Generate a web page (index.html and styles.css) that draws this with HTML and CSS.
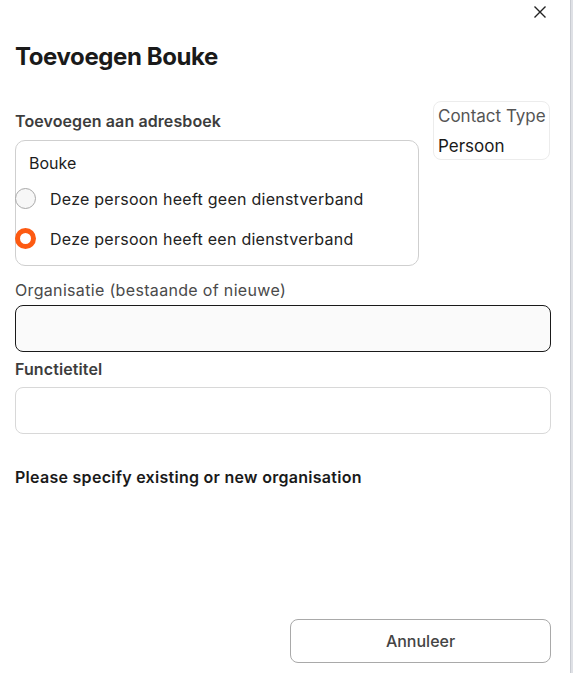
FILE: index.html
```html
<!DOCTYPE html>
<html lang="nl">
<head>
<meta charset="utf-8">
<link rel="stylesheet" href="styles.css">
</head>
<body>
<div class="backdrop">
  <div class="dialog">
    <button class="close" aria-label="Sluiten">
      <svg width="14" height="14" viewBox="0 0 14 14"><path d="M1.5 1.5 L12.5 12.5 M12.5 1.5 L1.5 12.5" stroke="#222" stroke-width="1.4" fill="none"/></svg>
    </button>
    <h1 class="title">Toevoegen Bouke</h1>
    <div class="top-row">
      <div class="left-col">
        <div class="label strong">Toevoegen aan adresboek</div>
        <div class="group">
          <div class="name">Bouke</div>
          <label class="radio"><span class="dot"></span><span>Deze persoon heeft geen dienstverband</span></label>
          <label class="radio"><span class="dot on"></span><span>Deze persoon heeft een dienstverband</span></label>
        </div>
      </div>
      <div class="type-box">
        <div class="type-label">Contact Type</div>
        <div class="type-value">Persoon</div>
      </div>
    </div>
    <div class="label light org-label">Organisatie (bestaande of nieuwe)</div>
    <div class="input focused org-input"></div>
    <div class="label strong func-label">Functietitel</div>
    <div class="input"></div>
    <div class="warning">Please specify existing or new organisation</div>
    <div class="footer">
      <button class="cancel">Annuleer</button>
    </div>
  </div>
</div>
</body>
</html>
```

FILE: styles.css
```css
* { box-sizing: border-box; }
html, body { margin: 0; padding: 0; background: #fff; }
body {
  font-family: Inter, "Noto Sans", sans-serif;
  color: #1c1c1c;
}
.backdrop {
  width: 573px;
  height: 673px;
  background: #dfe1e6;
  display: flex;
}
.dialog {
  width: 571px;
  height: 673px;
  background: #fff;
  border-right: 1px solid #c9ccd2;
  padding: 0 19px 0 15px;
  position: relative;
  display: flex;
  flex-direction: column;
}
.close {
  position: absolute;
  right: 23px;
  top: 5px;
  border: 0;
  background: none;
  padding: 0;
  width: 14px;
  height: 14px;
}
.title {
  margin: 43px 0 0;
  font-size: 24px;
  font-weight: 700;
  letter-spacing: -0.4px;
  line-height: 28px;
  color: #1a1a1a;
}
.top-row {
  display: flex;
  justify-content: space-between;
  margin-top: 30px;
}
.left-col { width: 404px; }
.label {
  font-size: 16px;
  line-height: 20px;
}
.strong { font-weight: 600; color: #3d3d3d; letter-spacing: 0.1px; }
.light { font-weight: 400; color: #4a4a4a; letter-spacing: 0.33px; }
.left-col .label { margin-top: 10px; }
.group {
  margin-top: 9px;
  border: 1px solid #cfcfcf;
  border-radius: 10px;
  height: 126px;
  padding-top: 12px;
}
.name {
  padding-left: 13px;
  font-size: 16px;
  line-height: 20px;
  color: #1c1c1c;
}
.radio {
  display: flex;
  align-items: center;
  gap: 14px;
  margin-left: -1px;
  font-size: 16px;
  line-height: 20px;
  letter-spacing: 0.25px;
  color: #222;
  margin-top: 15px;
}
.radio + .radio { margin-top: 19px; }
.dot {
  width: 21px;
  height: 21px;
  border-radius: 50%;
  border: 1px solid #a8a8a8;
  background: #f7f7f7;
  flex: none;
}
.dot.on {
  border: 5px solid #fd5a12;
  background: #fff;
}
.type-box {
  width: 117px;
  height: 59px;
  border: 1px solid #ececec;
  border-radius: 8px;
  padding: 3px 0 0 4px;
  margin-right: 1px;
}
.type-label {
  font-size: 17px;
  line-height: 22px;
  color: #555;
  white-space: nowrap;
}
.type-value {
  margin-top: 8px;
  font-size: 17px;
  line-height: 22px;
  color: #1a1a1a;
}
.org-label { margin-top: 14px; }
.input {
  margin-top: 8px;
  height: 47px;
  border: 1px solid #d8d8d8;
  border-radius: 8px;
  background: #fff;
}
.input.org-input { margin-top: 5px; }
.input.focused {
  border-color: #1a1a1a;
  background: #fafafa;
}
.func-label { margin-top: 7px; }
.warning {
  margin-top: 33px;
  font-size: 16px;
  font-weight: 600;
  line-height: 20px;
  letter-spacing: 0.28px;
  color: #1a1a1a;
}
.footer {
  margin-top: auto;
  margin-bottom: 10px;
  display: flex;
  justify-content: flex-end;
}
.cancel {
  width: 261px;
  height: 44px;
  border: 1px solid #a9a9a9;
  border-radius: 8px;
  background: #fff;
  font-family: inherit;
  font-size: 16px;
  font-weight: 500;
  color: #444;
}
```
